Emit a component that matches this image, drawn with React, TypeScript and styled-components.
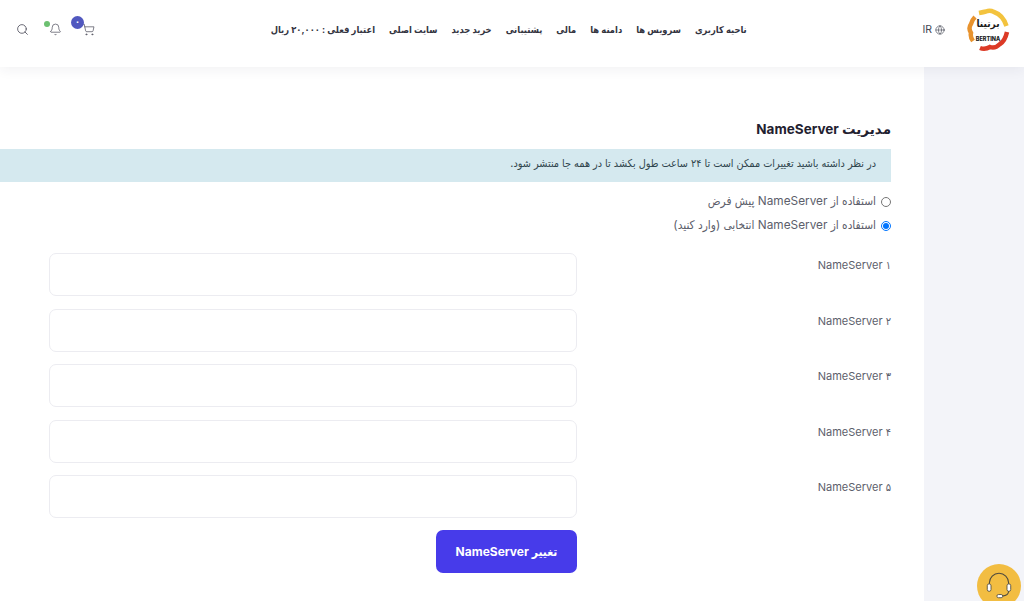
import React from 'react'
import styled, { createGlobalStyle } from 'styled-components'
import { Bell, Globe, Search, ShoppingCart } from 'lucide-react'

const GlobalStyle = createGlobalStyle`
  html, body {
    margin: 0;
    padding: 0;
    background: #fff;
    overflow: hidden;
  }
  * {
    box-sizing: border-box;
  }
  body {
    font-family: Inter, "DejaVu Sans", "Noto Sans", sans-serif;
    font-stretch: condensed;
  }
`

const Page = styled.div`
  width: 1024px;
  height: 601px;
  display: flex;
  flex-direction: column;
  overflow: hidden;
  position: relative;
`

const Header = styled.header`
  height: 67px;
  flex: none;
  background: #fff;
  display: flex;
  align-items: center;
  justify-content: space-between;
  padding: 0 14px 8px 16px;
  box-shadow: 0 2px 12px rgba(40, 40, 70, 0.07);
  position: relative;
  z-index: 2;
`

const LeftTools = styled.div`
  display: flex;
  align-items: center;
  gap: 20px;
  color: #4a4a58;
`

const ToolIcon = styled.span`
  position: relative;
  display: flex;
  width: 13px;
  height: 13px;
`

const CartBadge = styled.span`
  position: absolute;
  top: -7px;
  left: -11px;
  width: 13px;
  height: 13px;
  border-radius: 50%;
  background: #5158bf;
  color: #fff;
  font-size: 9px;
  font-weight: 700;
  line-height: 12px;
  text-align: center;
`

const BellDot = styled.span`
  position: absolute;
  top: -2px;
  left: -5px;
  width: 6px;
  height: 6px;
  border-radius: 50%;
  background: #6cc070;
`

const Nav = styled.nav`
  direction: rtl;
  display: flex;
  align-items: center;
  gap: 14px;
  font-size: 9.3px;
  font-weight: 700;
  color: #33343f;
  white-space: nowrap;
`

const Brand = styled.div`
  display: flex;
  align-items: center;
  gap: 21px;
`

const Lang = styled.div`
  display: flex;
  align-items: center;
  gap: 3px;
  font-size: 10.5px;
  color: #444654;
`

const LogoWrap = styled.div`
  position: relative;
  width: 44px;
  height: 44px;
`

const LogoFa = styled.span`
  position: absolute;
  top: 9px;
  left: 0;
  width: 44px;
  text-align: center;
  font-size: 10px;
  font-weight: 700;
  color: #1a1a1a;
`

const LogoEn = styled.span`
  position: absolute;
  top: 28px;
  left: 0;
  width: 44px;
  text-align: center;
  font-size: 5.5px;
  font-weight: 800;
  color: #1a1a1a;
`

const Body = styled.div`
  flex: 1;
  display: flex;
  direction: rtl;
  min-height: 0;
`

const Sidebar = styled.aside`
  width: 100px;
  flex: none;
  background: #f3f4f9;
`

const Main = styled.main`
  flex: 1;
  padding: 51px 33px 0 0;
  display: flex;
  flex-direction: column;
  min-width: 0;
`

const Title = styled.h1`
  margin: 0 0 9px;
  font-size: 13.5px;
  font-stretch: normal;
  line-height: 22px;
  font-weight: 700;
  color: #1f2130;
`

const Notice = styled.div`
  height: 33px;
  background: #d5e9ef;
  color: #30454d;
  font-size: 10.8px;
  line-height: 30px;
  padding-right: 15px;
  margin-bottom: 7px;
`

const RadioRow = styled.label`
  display: flex;
  align-items: center;
  gap: 5px;
  height: 24px;
  font-size: 11.8px;
  color: #5c5e6b;
`

const RadioInput = styled.input`
  margin: 2px 0 0;
  width: 10px;
  height: 10px;
  flex: none;
`

const Fields = styled.div`
  margin-top: 16px;
  display: flex;
  flex-direction: column;
  gap: 12.5px;
`

const FieldRow = styled.div`
  display: flex;
  justify-content: space-between;
  padding-left: 49px;
`

const FieldLabel = styled.label`
  font-size: 11px;
  line-height: 24px;
  color: #5c5e6b;
`

const FieldInput = styled.input`
  width: 528px;
  height: 43px;
  border: 1px solid #ececf1;
  border-radius: 7px;
  background: #fff;
  outline: none;
`

const SubmitRow = styled.div`
  margin-top: 12px;
  display: flex;
  justify-content: flex-end;
  padding-left: 49px;
`

const SubmitSpacer = styled.div`
  width: 528px;
`

const Submit = styled.button`
  display: block;
  width: 141px;
  height: 43px;
  border: 0;
  border-radius: 7px;
  background: #473bea;
  color: #fff;
  font: inherit;
  font-size: 12px;
  font-weight: 700;
`

const HelpButton = styled.div`
  position: absolute;
  left: 977px;
  top: 564px;
  width: 44px;
  height: 44px;
  border-radius: 50%;
  background: #f2bd42;
  display: flex;
  align-items: center;
  justify-content: center;
  z-index: 3;
`

const Logo = () => (
  <LogoWrap>
    <svg width="44" height="44" viewBox="0 0 44 44" fill="none">
      <path d="M13 5 Q18 4 20 3.5 Q24 2 28 4 Q37 7 40.5 18" stroke="#f3c33e" strokeWidth="4.5" />
      <path d="M41 24 Q39 33 34 36 Q29 41 24 39 Q19 42 14 40" stroke="#dc3a26" strokeWidth="4.5" />
      <path d="M7 33 Q4 29 5 25 Q2 20 5 16 Q6 12 9 9" stroke="#e8932e" strokeWidth="4.5" />
    </svg>
    <LogoFa>برتینا</LogoFa>
    <LogoEn>BERTINA</LogoEn>
  </LogoWrap>
)

const Headset = () => (
  <svg width="32" height="32" viewBox="0 0 30 30" fill="none">
    <path d="M6 16 V12 a9 9 0 0 1 18 0 V16" stroke="#4e4a3e" strokeWidth="1" />
    <rect x="4" y="13" width="3.5" height="7" rx="1.7" fill="#fff" stroke="#4e4a3e" strokeWidth="0.8" />
    <rect x="22.5" y="13" width="3.5" height="7" rx="1.7" fill="#fff" stroke="#4e4a3e" strokeWidth="0.8" />
    <path d="M24 20 Q24 24 18 24.5" stroke="#4e4a3e" strokeWidth="1" />
    <rect x="13" y="23" width="5.5" height="3" rx="1.5" fill="#fff" stroke="#4e4a3e" strokeWidth="0.8" />
  </svg>
)

const navItems = [
  'ناحیه کاربری',
  'سرویس ها',
  'دامنه ها',
  'مالی',
  'پشتیبانی',
  'خرید جدید',
  'سایت اصلی',
  'اعتبار فعلی : ۲۰,۰۰۰ ریال',
]

const fields = ['۱', '۲', '۳', '۴', '۵']

export default function App() {
  return (
    <Page>
      <GlobalStyle />
      <Header>
        <LeftTools>
          <ToolIcon><Search size={13} strokeWidth={1.5} /></ToolIcon>
          <ToolIcon>
            <BellDot />
            <Bell size={13} strokeWidth={1.3} />
          </ToolIcon>
          <ToolIcon>
            <CartBadge>۰</CartBadge>
            <ShoppingCart size={13} strokeWidth={1.3} />
          </ToolIcon>
        </LeftTools>
        <Nav>
          {navItems.map((item) => (
            <span key={item}>{item}</span>
          ))}
        </Nav>
        <Brand>
          <Lang>
            IR
            <Globe size={10} strokeWidth={1.5} />
          </Lang>
          <Logo />
        </Brand>
      </Header>
      <Body>
        <Sidebar />
        <Main>
          <Title>مدیریت NameServer</Title>
          <Notice>در نظر داشته باشید تغییرات ممکن است تا ۲۴ ساعت طول بکشد تا در همه جا منتشر شود.</Notice>
          <RadioRow>
            <RadioInput type="radio" name="ns" />
            استفاده از NameServer پیش فرض
          </RadioRow>
          <RadioRow>
            <RadioInput type="radio" name="ns" defaultChecked />
            استفاده از NameServer انتخابی (وارد کنید)
          </RadioRow>
          <Fields>
            {fields.map((n) => (
              <FieldRow key={n}>
                <FieldLabel>NameServer {n}</FieldLabel>
                <FieldInput type="text" />
              </FieldRow>
            ))}
          </Fields>
          <SubmitRow>
            <SubmitSpacer>
              <Submit>تغییر NameServer</Submit>
            </SubmitSpacer>
          </SubmitRow>
        </Main>
      </Body>
      <HelpButton><Headset /></HelpButton>
    </Page>
  )
}
